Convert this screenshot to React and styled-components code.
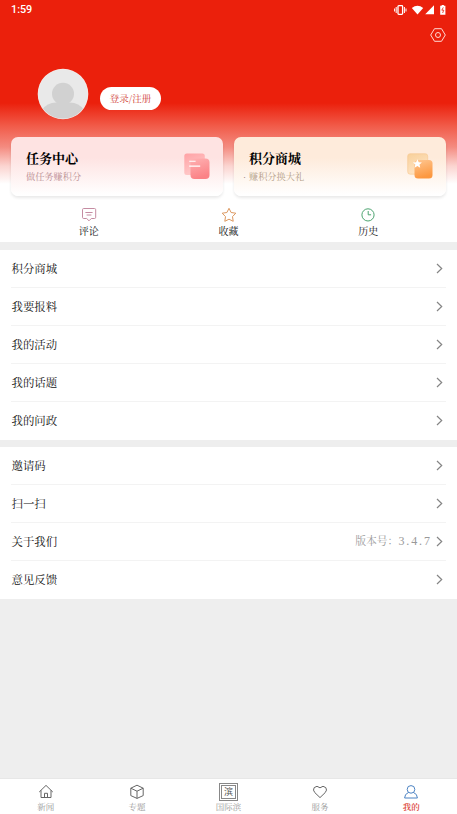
import React from 'react'
import styled, { createGlobalStyle } from 'styled-components'

const menuTop = ['积分商城', '我要报料', '我的活动', '我的话题', '我的问政']
const menuBottom = ['邀请码', '扫一扫', '关于我们', '意见反馈']

const StatusIcons = () => (
  <svg width="54" height="12" viewBox="0 0 54 12" fill="#fff">
    <rect x="4" y="1.7" width="4.6" height="8.6" rx="0.8" fill="none" stroke="#fff" strokeWidth="1.3" />
    <path d="M2.2 3v6M0.6 4.5v3M10.4 3v6M12 4.5v3" stroke="#fff" strokeWidth="1" />
    <path d="M17.8 4.1Q23.5 -0.4 29.2 4.1L23.5 10.6Z" />
    <path d="M40 1.3V10.2H31.2Z" />
    <path d="M46.2 1.8h1.5V0.9h2.2v0.9h1.5v8.9h-5.2Z" />
    <path d="M49.3 3.4l-1.5 2.8h2l-1.2 2.8" fill="none" stroke="#eb200c" strokeWidth="0.8" />
  </svg>
)

const SettingsIcon = () => (
  <svg width="16" height="14" viewBox="0 0 16 14" fill="none" stroke="#ffd9d4" strokeWidth="1">
    <path d="M4.5 0.7h7L15.3 7l-3.8 6.3h-7L0.7 7Z" strokeLinejoin="round" />
    <circle cx="8" cy="7" r="2.5" />
  </svg>
)

const Avatar = () => (
  <svg width="52" height="52" viewBox="0 0 52 52">
    <defs>
      <clipPath id="face">
        <circle cx="26" cy="26" r="24.6" />
      </clipPath>
    </defs>
    <circle cx="26" cy="26" r="25.3" fill="#f6e9e7" />
    <g clipPath="url(#face)">
      <rect width="52" height="52" fill="#e9e9e9" />
      <circle cx="26" cy="25.8" r="11" fill="#d1d1d1" />
      <path d="M5 42Q10 34.5 19 34.5H33Q42 34.5 47 42V52H5Z" fill="#d1d1d1" />
    </g>
  </svg>
)

const TaskIcon = () => (
  <svg width="26" height="27" viewBox="0 0 26 27">
    <defs>
      <linearGradient id="taskBack" x2="0.4" y2="1">
        <stop offset="0" stopColor="#ffa2a5" />
        <stop offset="1" stopColor="#ffcaca" />
      </linearGradient>
      <linearGradient id="taskFront" x2="0.3" y2="1">
        <stop offset="0" stopColor="#ffb1b2" />
        <stop offset="1" stopColor="#fb8286" />
      </linearGradient>
    </defs>
    <rect x="0.3" y="0.5" width="20.5" height="21.5" rx="2.5" fill="url(#taskBack)" />
    <rect x="6.5" y="5.5" width="19" height="20.5" rx="4" fill="url(#taskFront)" />
    <path d="M5.2 8.3h6.4M5.2 13.1h11" stroke="#fff" strokeWidth="1.1" />
  </svg>
)

const MallIcon = () => (
  <svg width="26" height="27" viewBox="0 0 26 27">
    <defs>
      <linearGradient id="mallBack" x2="0.4" y2="1">
        <stop offset="0" stopColor="#f8d09a" />
        <stop offset="1" stopColor="#ffe4c4" />
      </linearGradient>
      <linearGradient id="mallFront" x2="0.3" y2="1">
        <stop offset="0" stopColor="#ffc792" />
        <stop offset="1" stopColor="#fc9840" />
      </linearGradient>
    </defs>
    <rect x="0.7" y="0.7" width="20" height="20.5" rx="2.5" fill="url(#mallBack)" stroke="#f6c88f" strokeWidth="0.6" />
    <rect x="7.5" y="7" width="18" height="18.5" rx="3.5" fill="url(#mallFront)" />
    <path d="M10.4 6.3l1.3 2.9 3.2.3-2.4 2.1.7 3.1-2.8-1.6-2.8 1.6.7-3.1-2.4-2.1 3.2-.3Z" fill="#fff" />
  </svg>
)

const CommentIcon = () => (
  <svg width="16" height="16" viewBox="0 0 16 16" fill="none" stroke="#c58ca2" strokeWidth="1">
    <path d="M2.7 1.5h10.8q1.2 0 1.2 1.2v7.6q0 1.2-1.2 1.2h-3.2L8 13.8l-2.3-2.3h-3q-1.2 0-1.2-1.2V2.7q0-1.2 1.2-1.2Z" />
    <path d="M4.4 5.5h7.2M5.6 8h4.8" />
  </svg>
)

const StarIcon = () => (
  <svg width="16" height="16" viewBox="0 0 16 16" fill="none" stroke="#dc9860" strokeWidth="1" strokeLinejoin="round">
    <path d="M8 1.3l2.1 4.2 4.7.7-3.3 3.4.7 4.7L8 12.2l-4.2 2.1.7-4.7L1.2 6.2l4.7-.7Z" />
  </svg>
)

const ClockIcon = () => (
  <svg width="16" height="16" viewBox="0 0 16 16" fill="none" stroke="#4ca470" strokeWidth="1">
    <circle cx="8" cy="7.9" r="6.1" />
    <path d="M8.2 4v3.8h2.9" />
  </svg>
)

const Chevron = () => (
  <svg width="7" height="11" viewBox="0 0 7 11" fill="none" stroke="#858585" strokeWidth="1.2">
    <path d="M1 1l4.7 4.5L1 10" />
  </svg>
)

const HomeIcon = () => (
  <svg width="16" height="16" viewBox="0 0 16 16" fill="none" stroke="#666" strokeWidth="1">
    <path d="M1.2 8L8 1.4 14.8 8M3 6.3v7.2h10V6.3M6.5 13.5V9.3h3v4.2" />
  </svg>
)

const CubeIcon = () => (
  <svg width="16" height="16" viewBox="0 0 16 16" fill="none" stroke="#666" strokeWidth="1" strokeLinejoin="round">
    <path d="M8 1.2l6.2 3v7.4L8 14.4l-6.2-2.8V4.2ZM1.8 4.2L8 7.2l6.2-3M8 7.2v7.2" />
  </svg>
)

const HeartIcon = () => (
  <svg width="16" height="16" viewBox="0 0 16 16" fill="none" stroke="#666" strokeWidth="1" strokeLinejoin="round">
    <path d="M8 13.6L2.8 8.6Q0.5 6.1 2.2 3.6 4.9 0.9 8 3.8 11.1.9 13.8 3.6 15.5 6.1 13.2 8.6Z" />
  </svg>
)

const UserIcon = () => (
  <svg width="16" height="16" viewBox="0 0 16 16" fill="none" stroke="#4c83c3" strokeWidth="1">
    <circle cx="8" cy="5.4" r="3.8" />
    <path d="M5.6 8.4Q1.6 10 1.6 14H14.4Q14.4 10 10.4 8.4" />
  </svg>
)

const MenuList = ({ items }) => (
  <Menu>
    {items.map(item => (
      <MenuRow key={item}>
        <RowLabel>{item}</RowLabel>
        <RowEnd>
          {item === '关于我们' && (
            <Version>
              版本号：<Digits>3.4.7</Digits>
            </Version>
          )}
          <Chevron />
        </RowEnd>
      </MenuRow>
    ))}
  </Menu>
)

const App = () => (
  <>
    <GlobalStyle />
    <Screen>
      <Header>
        <StatusBar>
          <Time>1:59</Time>
          <StatusIcons />
        </StatusBar>
        <Settings>
          <SettingsIcon />
        </Settings>
        <Profile>
          <Avatar />
          <LoginButton>登录/注册</LoginButton>
        </Profile>
        <Cards>
          <Card tint="#fee3e2">
            <div>
              <CardTitle>任务中心</CardTitle>
              <CardHint color="#b98c91">做任务赚积分</CardHint>
            </div>
            <TaskIcon />
          </Card>
          <Card tint="#feebdb">
            <div>
              <CardTitle>积分商城</CardTitle>
              <CardHint color="#b39c86" dot>赚积分换大礼</CardHint>
            </div>
            <MallIcon />
          </Card>
        </Cards>
        <Actions>
          <Action><CommentIcon />评论</Action>
          <Action><StarIcon />收藏</Action>
          <Action><ClockIcon />历史</Action>
        </Actions>
      </Header>
      <MenuList items={menuTop} />
      <MenuList items={menuBottom} />
      <TabBar>
        <Tab><HomeIcon />新闻</Tab>
        <Tab><CubeIcon />专题</Tab>
        <Tab><Seal><span>滨</span></Seal>国际滨</Tab>
        <Tab><HeartIcon />服务</Tab>
        <Tab active><UserIcon />我的</Tab>
      </TabBar>
    </Screen>
  </>
)
export default App

const GlobalStyle = createGlobalStyle`
  * {
    box-sizing: border-box;
  }
  body {
    margin: 0;
    font-family: 'Noto Serif CJK SC', 'Noto Serif SC', 'Noto Sans CJK SC', serif;
    color: #111;
  }
  svg {
    display: block;
    flex-shrink: 0;
  }
`

const Screen = styled.div`
  display: flex;
  flex-direction: column;
  width: 457px;
  height: 814px;
  overflow: hidden;
  background: #eee;
`

const Header = styled.header`
  flex: none;
  height: 242px;
  background: linear-gradient(#eb200c 0, #eb200c 103px, #f15b49 126px, #f48b80 147px, #fbd4d0 166px, #fff 184px);
`

const StatusBar = styled.div`
  display: flex;
  justify-content: space-between;
  align-items: center;
  height: 19px;
  padding: 0 9px 0 11px;
`

const Time = styled.span`
  font: 500 10.8px/19px Roboto, sans-serif;
  color: #fff;
`

const Settings = styled.div`
  display: flex;
  justify-content: flex-end;
  height: 49px;
  padding: 9px 11px 0 0;
`

const Profile = styled.div`
  display: flex;
  align-items: center;
  gap: 11px;
  height: 52px;
  padding-left: 37px;
`

const LoginButton = styled.button`
  width: 61px;
  height: 23px;
  margin-top: 8px;
  padding: 0;
  border: 0;
  border-radius: 12px;
  background: #fff;
  color: #d03a31;
  font: 9.5px/23px 'Noto Serif CJK SC', 'Noto Serif SC', 'Noto Sans CJK SC', serif;
  white-space: nowrap;
`

const Cards = styled.div`
  display: flex;
  gap: 11px;
  padding: 17px 11px 0;
`

const Card = styled.div`
  display: flex;
  justify-content: space-between;
  flex: 1;
  height: 59px;
  padding: 11px 13px 0 15px;
  border-radius: 7px;
  background: linear-gradient(${props => props.tint} 0, ${props => props.tint} 35%, #fff 98%);
  box-shadow: 0 2px 3px rgba(0, 0, 0, 0.09);

  > svg {
    margin-top: 5px;
  }
`

const CardTitle = styled.h2`
  margin: 0;
  font-size: 13px;
  line-height: 20px;
  font-weight: 700;
  color: #000;
`

const CardHint = styled.p`
  margin: 1px 0 0;
  font-size: 9.2px;
  line-height: 15px;
  color: ${props => props.color};

  &::before {
    content: '${props => (props.dot ? '·' : '')}';
    display: inline-block;
    width: 6px;
    margin-left: -6px;
    color: #77685a;
    font-family: 'Liberation Serif', serif;
  }
`

const Actions = styled.div`
  display: flex;
  padding: 11px 19px 0;
`

const Action = styled.div`
  display: flex;
  flex: 1;
  flex-direction: column;
  align-items: center;
  font-size: 10px;
  line-height: 15px;
`

const Menu = styled.ul`
  flex: none;
  margin: 8px 0 0;
  padding: 0 11px;
  list-style: none;
  background: #fff;

  & + & {
    margin-top: 7px;
  }
`

const MenuRow = styled.li`
  display: flex;
  justify-content: space-between;
  align-items: center;
  height: 38.05px;
  padding-right: 3px;
  border-bottom: 1px solid #f3f3f3;
  font-size: 11.4px;

  &:last-child {
    border-bottom-color: transparent;
  }
`

const RowLabel = styled.span`
  padding: 0 0 2px 0.5px;
`

const RowEnd = styled.div`
  display: flex;
  align-items: center;
  gap: 6px;
`

const Version = styled.span`
  display: flex;
  align-items: center;
  padding-bottom: 1px;
  font-size: 10.8px;
  line-height: 16px;
  white-space: nowrap;
  color: #999;
`

const Digits = styled.span`
  margin-right: -1.9px;
  font: 12px/16px 'Liberation Serif', serif;
  letter-spacing: 1.9px;
`

const TabBar = styled.nav`
  display: flex;
  height: 36px;
  margin-top: auto;
  padding-top: 5px;
  border-top: 1px solid #e7e7e7;
  background: #fff;
`

const Tab = styled.div`
  display: flex;
  flex: 1;
  flex-direction: column;
  align-items: center;
  font-size: 8.5px;
  line-height: 13px;
  font-weight: ${props => (props.active ? 600 : 400)};
  color: ${props => (props.active ? '#dc4436' : '#999')};
`

const Seal = styled.div`
  display: flex;
  justify-content: center;
  align-items: center;
  width: 19px;
  height: 18px;
  margin: -1px 0;
  border: 3px double #888;
  color: #555;
  font-family: 'Noto Sans CJK SC', sans-serif;
  font-size: 9px;
  line-height: 12px;
`
